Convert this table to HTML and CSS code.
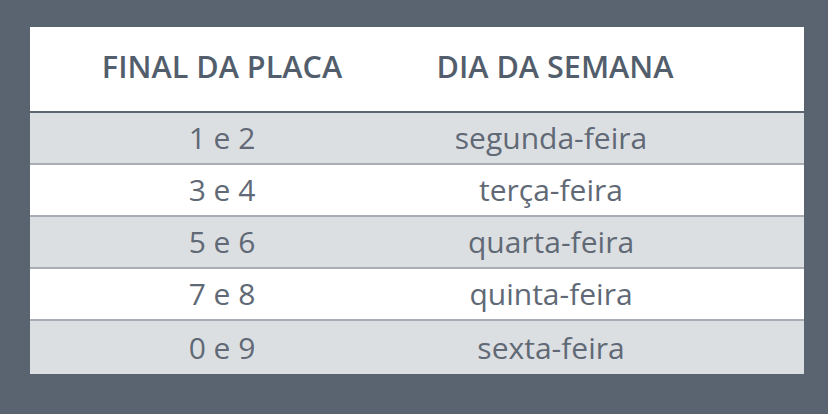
FILE: index.html
```html
<!DOCTYPE html>
<html lang="pt">
<head>
<meta charset="utf-8">
<link rel="stylesheet" href="styles.css">
</head>
<body>
<div class="page">
  <div class="table">
    <div class="row head">
      <div class="cell">FINAL DA PLACA</div>
      <div class="cell">DIA DA SEMANA</div>
    </div>
    <div class="row alt"><div class="cell">1 e 2</div><div class="cell">segunda-feira</div></div>
    <div class="row"><div class="cell">3 e 4</div><div class="cell">terça-feira</div></div>
    <div class="row alt"><div class="cell">5 e 6</div><div class="cell">quarta-feira</div></div>
    <div class="row"><div class="cell">7 e 8</div><div class="cell">quinta-feira</div></div>
    <div class="row alt last"><div class="cell">0 e 9</div><div class="cell">sexta-feira</div></div>
  </div>
</div>
</body>
</html>
```

FILE: styles.css
```css
html, body {
  margin: 0;
  padding: 0;
  background: #5a6370;
}
.page {
  width: 828px;
  height: 414px;
  box-sizing: border-box;
  padding: 27px 24px 0 30px;
  font-family: "Open Sans", "Noto Sans", sans-serif;
}
.table {
  width: 774px;
  display: flex;
  flex-direction: column;
}
.row {
  display: grid;
  grid-template-columns: 384px 274px 1fr;
  height: 50px;
  align-items: center;
  background: #ffffff;
  border-bottom: 2px solid #a9aeb6;
  color: #606975;
  font-size: 30px;
  line-height: 1;
}
.row .cell {
  text-align: center;
}
.row.alt {
  background: #dcdfe2;
}
.row.last {
  border-bottom: 0;
  height: 53px;
}
.row.head {
  height: 86px;
  box-sizing: border-box;
  padding-bottom: 5px;
  border-bottom: 2px solid #5d6673;
  font-size: 30.6px;
  font-weight: 600;
  color: #535e6c;
}
.row.head .cell:nth-child(2) {
  padding-left: 8px;
}
```
